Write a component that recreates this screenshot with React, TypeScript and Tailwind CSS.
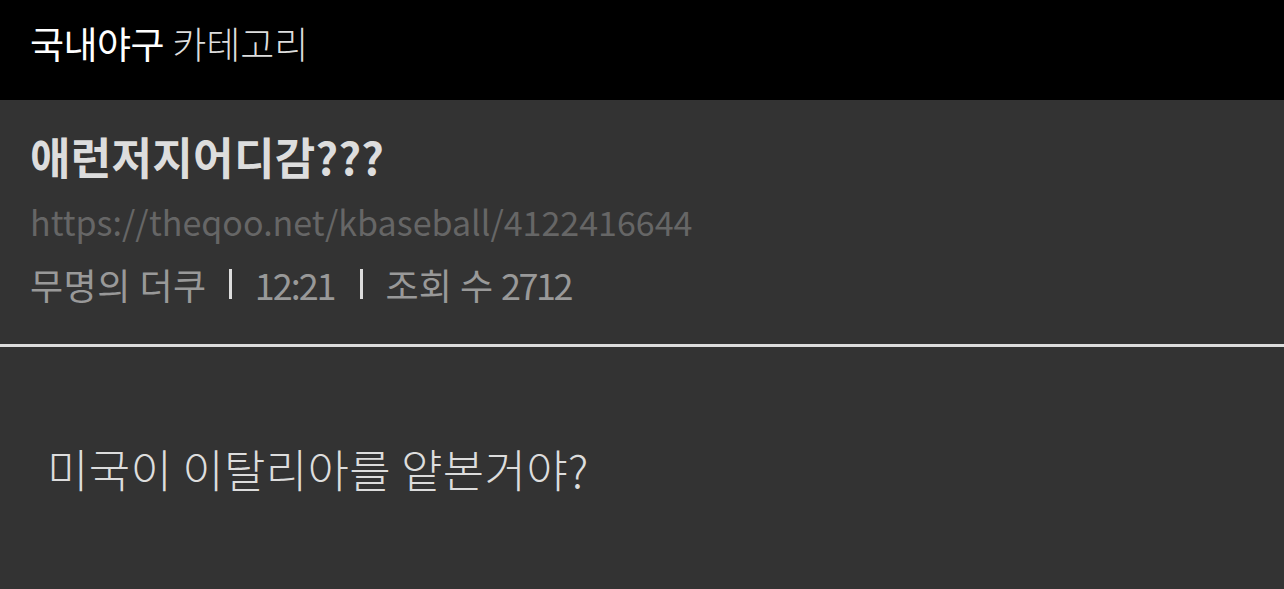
export default function App() {
  const kr = { fontFamily: '"Noto Sans CJK KR", "Noto Sans", sans-serif' };
  return (
    <div className="w-[1284px] h-[589px] bg-[#333333] overflow-hidden" style={kr}>
      <div className="h-[100px] bg-black pl-[30px] text-[37px] leading-[86px] whitespace-nowrap">
        <span className="text-white font-normal tracking-[-0.5px]">국내야구</span>
        <span className="text-[#dddddd] font-light ml-[8px]">카테고리</span>
      </div>
      <div className="px-[30px] pt-[26px] pb-[34px]">
        <div className="text-[44px] leading-[60px] font-bold text-[#dddddd] tracking-[0.3px]">애런저지어디감???</div>
        <div className="text-[34px] leading-[72px] text-[#666666]">https://theqoo.net/kbaseball/4122416644</div>
        <div className="flex items-center text-[36px] leading-[52px] text-[#999999] whitespace-nowrap">
          <span className="tracking-[0.5px]">무명의 더쿠</span>
          <span className="ml-[22px] mr-[23px] w-[3px] h-[30px] bg-[#dddddd]" />
          <span className="tracking-[-2px]">12:21</span>
          <span className="ml-[25px] mr-[23px] w-[3px] h-[30px] bg-[#dddddd]" />
          <span>조회 수 <span className="tracking-[-2.5px]">2712</span></span>
        </div>
      </div>
      <div className="h-[3px] bg-[#dddddd]" />
      <div className="pl-[47px] pt-[92px] text-[45px] leading-[60px] font-light text-[#dddddd] whitespace-nowrap tracking-[0.3px]">미국이 이탈리아를 얕본거야?</div>
    </div>
  );
}
